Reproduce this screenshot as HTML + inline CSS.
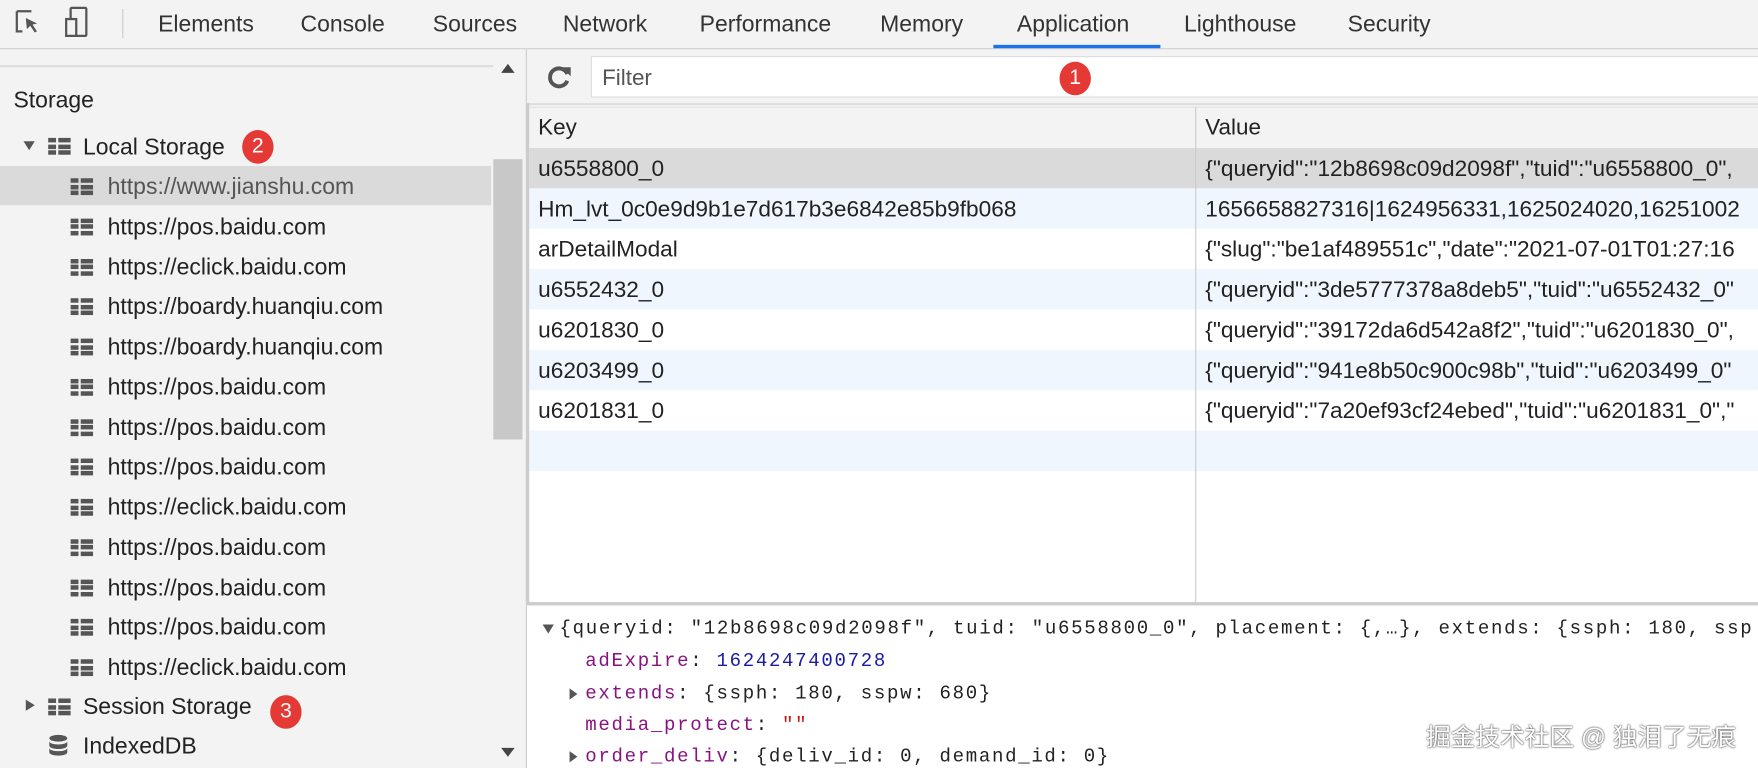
<!DOCTYPE html><html><head><meta charset="utf-8"><style>
body{margin:0;width:1758px;height:768px;overflow:hidden;background:#fff;font-family:"Liberation Sans","Noto Sans CJK SC",sans-serif}
#w{position:absolute;left:0;top:0;width:1568px;height:685px;transform:scale(1.12117);transform-origin:0 0;overflow:hidden}
.a{position:absolute}
.tab{position:absolute;top:10px;font-size:20.5px;color:#333}
.side{font-size:20.5px;color:#222}
.grid{display:inline-block;width:20px;height:15px;position:absolute;background:
linear-gradient(#555,#555) 0 0/7px 4px no-repeat,linear-gradient(#555,#555) 9px 0/11px 4px no-repeat,
linear-gradient(#555,#555) 0 5.5px/7px 4px no-repeat,linear-gradient(#555,#555) 9px 5.5px/11px 4px no-repeat,
linear-gradient(#555,#555) 0 11px/7px 4px no-repeat,linear-gradient(#555,#555) 9px 11px/11px 4px no-repeat}
.badge{position:absolute;width:28px;height:30px;border-radius:50%;background:#e53935;color:#fff;font-size:19px;text-align:center;line-height:30px}
.row{position:absolute;left:472px;width:1096px;height:36px;font-size:20.2px;color:#222}
.row span{position:absolute;top:8px;white-space:nowrap}
.mono{font-family:"Liberation Mono","DejaVu Sans Mono",monospace;font-size:17px;letter-spacing:1.5px;position:absolute;white-space:nowrap;color:#222}
.p{color:#881280}
</style></head><body><div id="w">
<div class="a" style="left:0;top:0;width:1568px;height:43px;background:#f3f3f3;border-bottom:1px solid #ccc"></div>
<svg class="a" style="left:13px;top:8px" width="30" height="28"><path d="M2 2h13M2 2v18h5" stroke="#555" stroke-width="2" fill="none"/><path d="M10 8l10 5-4 1 4 6-2 1-4-6-3 3z" fill="#555"/></svg>
<svg class="a" style="left:58px;top:5px" width="22" height="30"><rect x="5" y="2" width="14" height="25" rx="1" stroke="#555" stroke-width="2" fill="none"/><rect x="1" y="12" width="9" height="15" stroke="#555" stroke-width="2" fill="#f3f3f3"/></svg>
<div class="a" style="left:109px;top:8px;width:1px;height:26px;background:#ccc"></div>
<div class="tab" style="left:141px">Elements</div><div class="tab" style="left:268px">Console</div><div class="tab" style="left:386px">Sources</div><div class="tab" style="left:502px">Network</div><div class="tab" style="left:624px">Performance</div><div class="tab" style="left:785px">Memory</div><div class="tab" style="left:907px">Application</div><div class="tab" style="left:1056px">Lighthouse</div><div class="tab" style="left:1202px">Security</div>
<div class="a" style="left:886px;top:40px;width:149px;height:3px;background:#1a73e8"></div>
<div class="a" style="left:0;top:44px;width:469px;height:641px;background:#f3f3f3;border-right:1px solid #ccc"></div>
<div class="a" style="left:0;top:58px;width:440px;height:2px;background:#ddd"></div>
<div class="a" style="left:440px;top:142px;width:26px;height:250px;background:#c8c8c8"></div>
<div class="a" style="left:447px;top:57px;width:0;height:0;border:6px solid transparent;border-bottom:8px solid #444;border-top:0"></div>
<div class="a" style="left:447px;top:667px;width:0;height:0;border:6px solid transparent;border-top:8px solid #444;border-bottom:0"></div>
<div class="a" style="left:0;top:148px;width:438px;height:35px;background:#dadada"></div>
<div class="a side" style="left:12px;top:78px">Storage</div>
<div class="a" style="left:21px;top:126px;border:5px solid transparent;border-top:8px solid #555;border-bottom:0"></div>
<span class="grid" style="left:43px;top:123px"></span><div class="a side" style="left:74px;top:120px">Local Storage</div>
<div class="badge" style="left:216px;top:116px">2</div>
<div id="urls"></div>
<div class="a" style="left:23px;top:624px;border:5px solid transparent;border-left:8px solid #555;border-right:0"></div>
<span class="grid" style="left:43px;top:623px"></span><div class="a side" style="left:74px;top:619px">Session Storage</div>
<div class="badge" style="left:241px;top:620px">3</div>
<svg class="a" style="left:43px;top:655px" width="18" height="20"><ellipse cx="9" cy="3.5" rx="8" ry="3" fill="#555"/><path d="M1 6c0 4 16 4 16 0v4c0 4-16 4-16 0zM1 12c0 4 16 4 16 0v4c0 4-16 4-16 0z" fill="#555"/></svg>
<div class="a side" style="left:74px;top:654px">IndexedDB</div>
<div class="a" style="left:470px;top:44px;width:1098px;height:48px;background:#f3f3f3;border-bottom:2px solid #ddd"></div>
<svg class="a" style="left:487px;top:57px" width="24" height="24"><path d="M19 9A8 8 0 1 0 19 15" stroke="#555" stroke-width="3.5" fill="none"/><path d="M14 3l8 0 0 8z" fill="#555"/></svg>
<div class="a" style="left:527px;top:50px;width:1041px;height:35px;background:#fff;border:1px solid #ddd"></div>
<div class="a" style="left:537px;top:59px;font-size:20px;color:#555">Filter</div>
<div class="badge" style="left:945px;top:55px">1</div>
<div class="a" style="left:472px;top:95px;width:1096px;height:36px;background:#f3f3f3;border-bottom:2px solid #ccc;border-top:1px solid #ddd"></div>
<div class="a" style="left:480px;top:103px;font-size:20px;color:#222">Key</div>
<div class="a" style="left:1075px;top:103px;font-size:20px;color:#222">Value</div>
<div class="row" style="top:132px;background:#dadada"><span style="left:8px">u6558800_0</span><span style="left:603px">{"queryid":"12b8698c09d2098f","tuid":"u6558800_0",</span></div>
<div class="row" style="top:168px;background:#f0f6fd"><span style="left:8px">Hm_lvt_0c0e9d9b1e7d617b3e6842e85b9fb068</span><span style="left:603px">1656658827316|1624956331,1625024020,16251002</span></div>
<div class="row" style="top:204px"><span style="left:8px">arDetailModal</span><span style="left:603px">{"slug":"be1af489551c","date":"2021-07-01T01:27:16</span></div>
<div class="row" style="top:240px;background:#f0f6fd"><span style="left:8px">u6552432_0</span><span style="left:603px">{"queryid":"3de5777378a8deb5","tuid":"u6552432_0"</span></div>
<div class="row" style="top:276px"><span style="left:8px">u6201830_0</span><span style="left:603px">{"queryid":"39172da6d542a8f2","tuid":"u6201830_0",</span></div>
<div class="row" style="top:312px;background:#f0f6fd"><span style="left:8px">u6203499_0</span><span style="left:603px">{"queryid":"941e8b50c900c98b","tuid":"u6203499_0"</span></div>
<div class="row" style="top:348px"><span style="left:8px">u6201831_0</span><span style="left:603px">{"queryid":"7a20ef93cf24ebed","tuid":"u6201831_0","</span></div>
<div class="row" style="top:384px;background:#f0f6fd"></div>
<div class="a" style="left:1066px;top:95px;width:1px;height:443px;background:#ccc"></div>
<div class="a" style="left:470px;top:92px;width:2px;height:446px;background:#ccc"></div>
<div class="a" style="left:470px;top:537px;width:1098px;height:3px;background:#ccc"></div>
<div class="a" style="left:484px;top:557px;border:5px solid transparent;border-top:8px solid #555;border-bottom:0"></div>
<div class="mono" style="left:499px;top:552px">{queryid: "12b8698c09d2098f", tuid: "u6558800_0", placement: {,…}, extends: {ssph: 180, ssp</div>
<div class="mono" style="left:522px;top:581px"><span class="p">adExpire</span>: <span style="color:#1a1aa6">1624247400728</span></div>
<div class="a" style="left:508px;top:614px;border:5px solid transparent;border-left:7px solid #555;border-right:0"></div>
<div class="mono" style="left:522px;top:610px"><span class="p">extends</span>: {ssph: 180, sspw: 680}</div>
<div class="mono" style="left:522px;top:638px"><span class="p">media_protect</span>: <span style="color:#c41a16">""</span></div>
<div class="a" style="left:508px;top:670px;border:5px solid transparent;border-left:7px solid #555;border-right:0"></div>
<div class="mono" style="left:522px;top:666px"><span class="p">order_deliv</span>: {deliv_id: 0, demand_id: 0}</div>
<div class="a" style="left:1272px;top:640px;font-size:22px;color:#fff;text-shadow:0 0 2px #555,0 0 1px #333">掘金技术社区 @ 独泪了无痕</div>
</div>
<script>
var u=["https://www.jianshu.com","https://pos.baidu.com","https://eclick.baidu.com","https://boardy.huanqiu.com","https://boardy.huanqiu.com","https://pos.baidu.com","https://pos.baidu.com","https://pos.baidu.com","https://eclick.baidu.com","https://pos.baidu.com","https://pos.baidu.com","https://pos.baidu.com","https://eclick.baidu.com"],h="";
for(var i=0;i<u.length;i++){var y=156+i*35.75;h+='<span class="grid" style="left:63px;top:'+(y+3)+'px"></span><div class="a side" style="left:96px;top:'+(y-1)+'px;'+(i==0?'color:#555':'')+'">'+u[i]+'</div>';}
document.getElementById("urls").outerHTML=h;
</script>
</body></html>
